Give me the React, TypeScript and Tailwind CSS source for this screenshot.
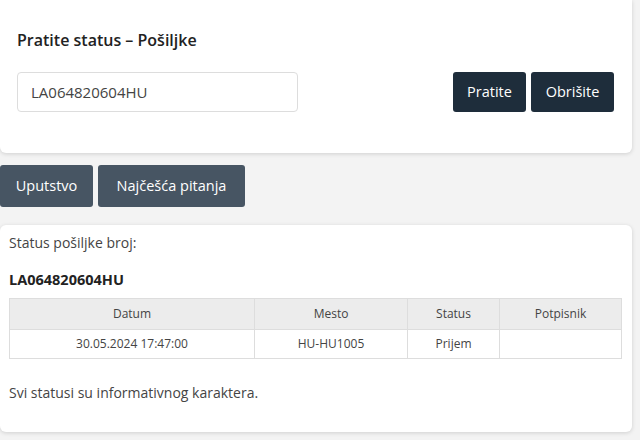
export default function App() {
  return (
    <div className="h-[440px] w-[640px] overflow-hidden bg-[#f3f3f3] text-[#333]" style={{ fontFamily: '"Open Sans", sans-serif' }}>
      {/* search card */}
      <div className="h-[153px] w-[632px] rounded-b-md bg-white px-[17px] pt-[28px] shadow-[0_1px_4px_rgba(0,0,0,0.15)]">
        <h1 className="text-[16px] font-semibold leading-[24px] text-[#222]">Pratite status – Pošiljke</h1>
        <div className="mt-[20px] flex items-center">
          <div className="flex h-[40px] w-[281px] items-center rounded-[4px] border border-[#ddd] px-[13px] text-[15px] text-[#444]">
            LA064820604HU
          </div>
          <div className="ml-auto mr-[1px] flex gap-[5px]">
            <button className="h-[40px] w-[73px] rounded-[3px] bg-[#1e2d3b] text-[14.5px] text-white">Pratite</button>
            <button className="h-[40px] w-[83px] rounded-[3px] bg-[#1e2d3b] text-[14.5px] text-white">Obrišite</button>
          </div>
        </div>
      </div>

      {/* nav buttons */}
      <div className="mt-[12px] flex gap-[5px]">
        <button className="h-[42px] w-[93px] rounded-[3px] bg-[#475563] text-[14.5px] text-white">Uputstvo</button>
        <button className="h-[42px] w-[147px] rounded-[3px] bg-[#475563] text-[14.5px] text-white">Najčešća pitanja</button>
      </div>

      {/* result card */}
      <div className="mt-[18px] h-[207px] w-[632px] rounded-md bg-white px-[9px] pt-[8px] shadow-[0_1px_4px_rgba(0,0,0,0.15)]">
        <p className="text-[14px] leading-[20px] text-[#444]">Status pošiljke broj:</p>
        <p className="mt-[17px] text-[14.5px] font-bold leading-[20px] text-[#222]">LA064820604HU</p>
        <table className="mt-[8px] w-[613px] border-collapse text-center text-[12px] text-[#444]">
          <thead>
            <tr className="h-[31px] bg-[#ececec]">
              <th className="w-[245px] border border-[#ddd] font-normal">Datum</th>
              <th className="w-[153px] border border-[#ddd] font-normal">Mesto</th>
              <th className="w-[92px] border border-[#ddd] font-normal">Status</th>
              <th className="border border-[#ddd] font-normal">Potpisnik</th>
            </tr>
          </thead>
          <tbody>
            <tr className="h-[29px]">
              <td className="border border-[#ddd]">30.05.2024 17:47:00</td>
              <td className="border border-[#ddd]">HU-HU1005</td>
              <td className="border border-[#ddd]">Prijem</td>
              <td className="border border-[#ddd]"></td>
            </tr>
          </tbody>
        </table>
        <p className="mt-[24px] text-[14px] leading-[20px] text-[#444]">Svi statusi su informativnog karaktera.</p>
      </div>
    </div>
  );
}
